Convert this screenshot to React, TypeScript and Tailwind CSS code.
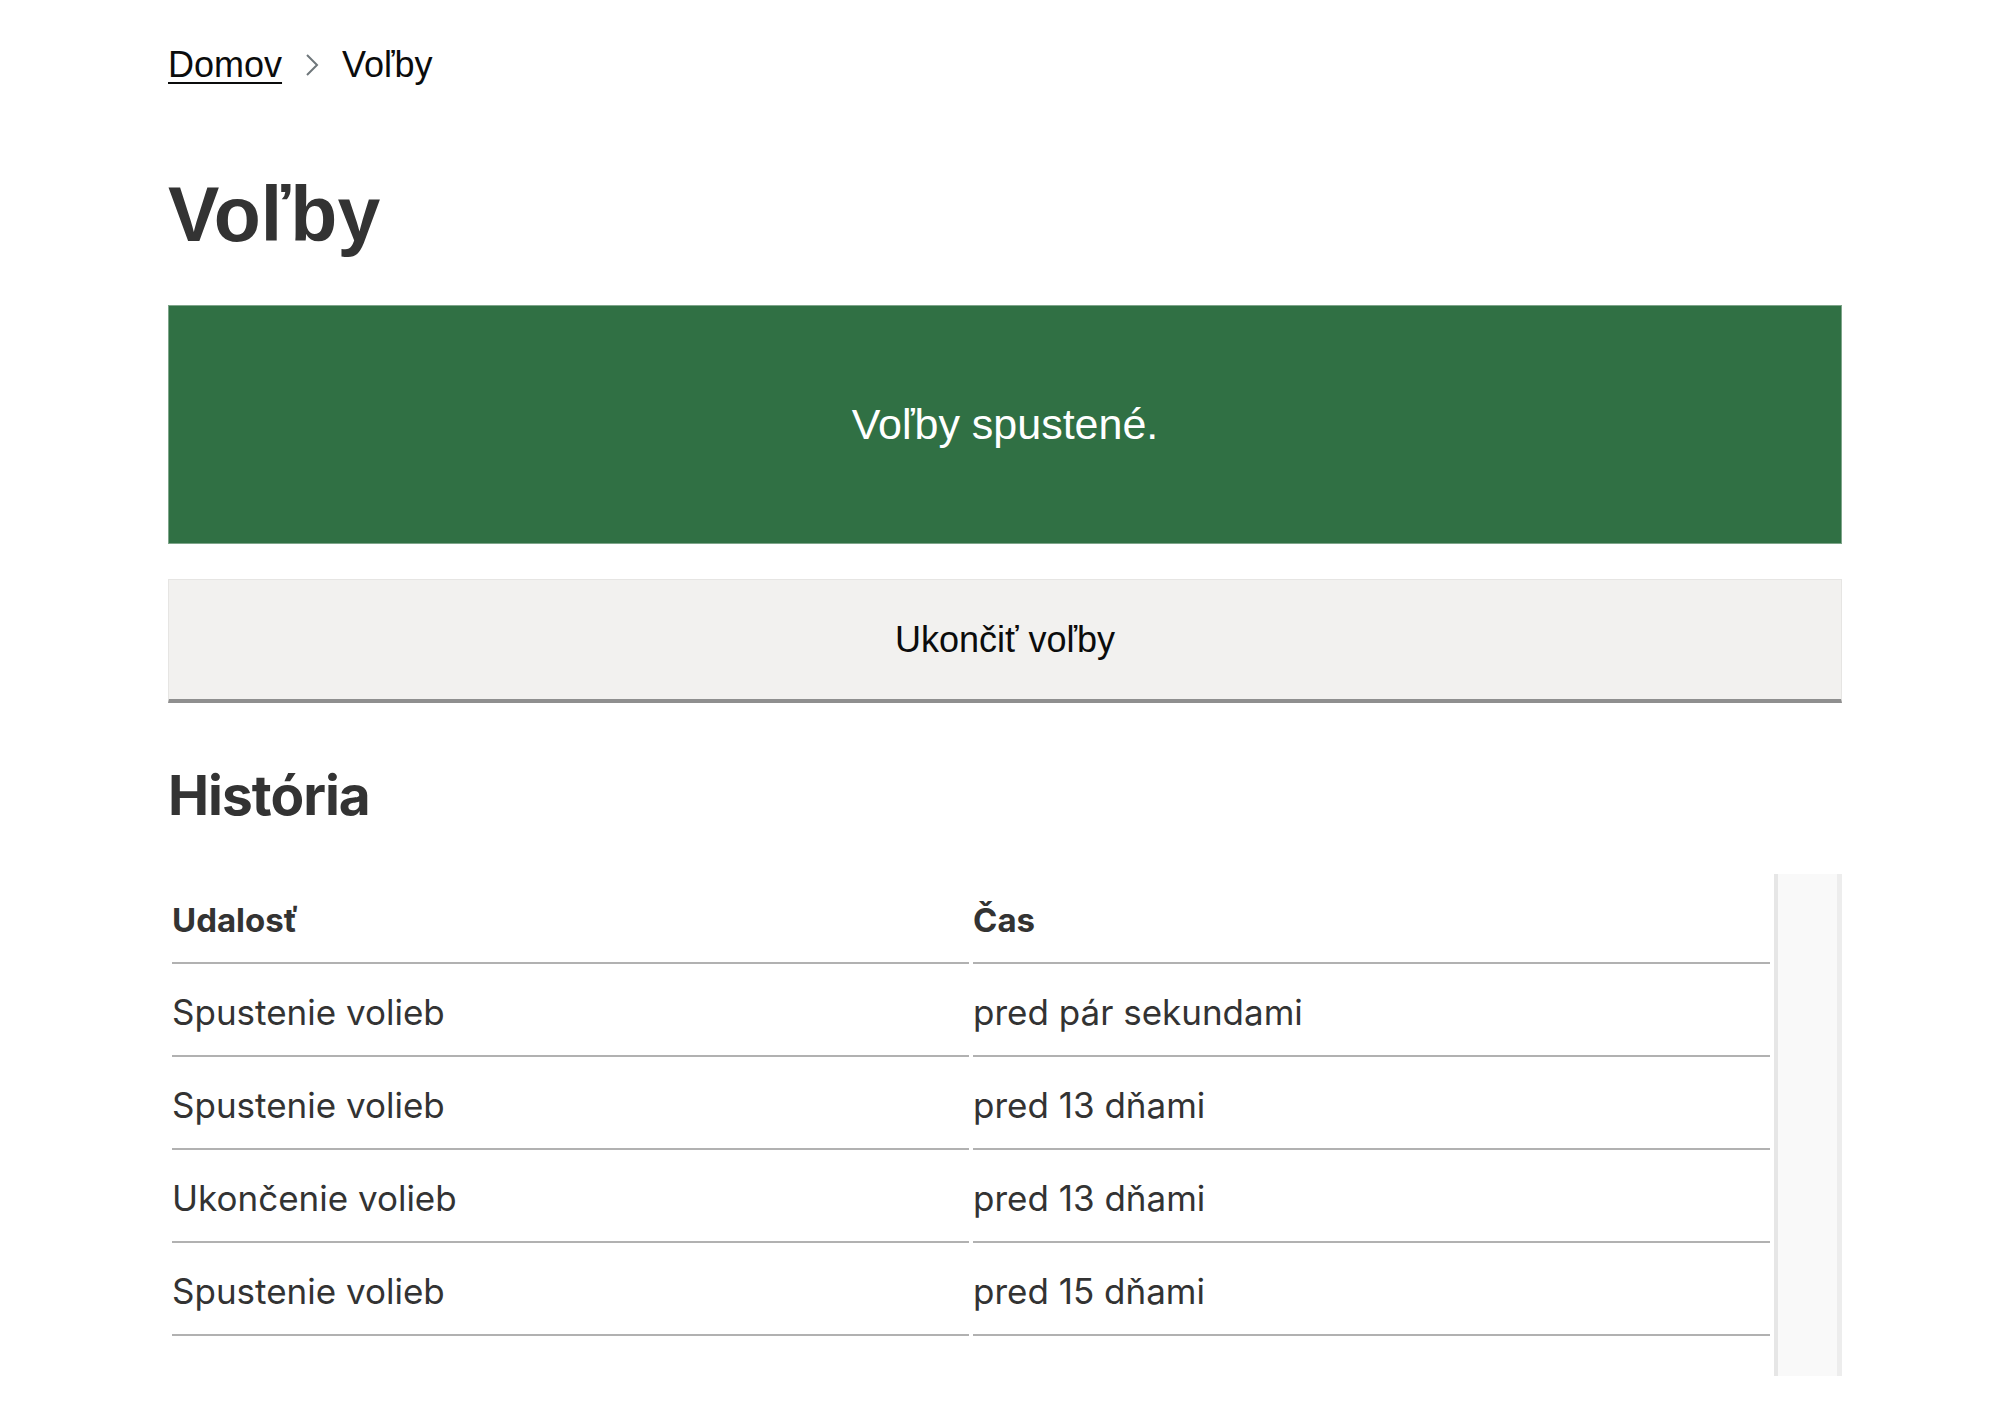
import React from 'react';

const rows = [
  { event: 'Spustenie volieb', time: 'pred pár sekundami' },
  { event: 'Spustenie volieb', time: 'pred 13 dňami' },
  { event: 'Ukončenie volieb', time: 'pred 13 dňami' },
  { event: 'Spustenie volieb', time: 'pred 15 dňami' },
];

const Chevron = () => (
  <svg width="14" height="24" viewBox="0 0 14 24" className="shrink-0">
    <polyline points="2,2 12,12 2,22" fill="none" stroke="#6f777b" strokeWidth="2" />
  </svg>
);

export default function App() {
  return (
    <div className="min-h-screen bg-white">
      <div className="ml-[168px] w-[1674px] pt-[44px] pb-[36px]">
        {/* Breadcrumb */}
        <nav className="flex items-center gap-[23px] text-[36px] leading-[41px] text-[#0b0c0c] font-['Liberation_Sans',Arial,sans-serif]">
          <a href="#" className="underline decoration-[2px] underline-offset-[5px]">Domov</a>
          <Chevron />
          <span>Voľby</span>
        </nav>

        <h1 className="mt-[85px] text-[77px] leading-[88px] font-bold text-[#333333] font-['Liberation_Sans',Arial,sans-serif]">
          Voľby
        </h1>

        {/* Status banner */}
        <div className="mt-[47px] h-[239px] flex items-center justify-center bg-[#307044] border border-[#7ea58a] text-white text-[43px] font-['Liberation_Sans',Arial,sans-serif]">
          Voľby spustené.
        </div>

        <button className="mt-[35px] w-full h-[124px] flex items-center justify-center bg-[#f2f1ef] border border-[#e6e5e3] border-b-[4px] border-b-[#8f8f8f] text-[36px] text-[#0b0c0c] font-['Liberation_Sans',Arial,sans-serif]">
          Ukončiť voľby
        </button>

        <h2 className="mt-[59px] text-[55px] leading-[67px] font-bold text-[#333333] font-['Inter',sans-serif] tracking-[-1px]">
          História
        </h2>

        {/* History table */}
        <div className="mt-[45px] flex font-['Inter',sans-serif] text-[#333333]">
          <div className="flex-1 pb-[40px]">
            <table className="w-full border-separate border-spacing-x-[4px] border-spacing-y-0 table-fixed">
              <thead>
                <tr>
                  <th className="text-left font-bold text-[33px] leading-[48px] pt-[22px] pb-[18px] border-b-[2px] border-[#b1b1b1]">Udalosť</th>
                  <th className="text-left font-bold text-[33px] leading-[48px] pt-[22px] pb-[18px] border-b-[2px] border-[#b1b1b1]">Čas</th>
                </tr>
              </thead>
              <tbody>
                {rows.map((r, i) => (
                  <tr key={i}>
                    <td className="text-[35px] leading-[51px] pt-[23px] pb-[17px] border-b-[2px] border-[#b1b1b1]">{r.event}</td>
                    <td className="text-[35px] leading-[51px] pt-[23px] pb-[17px] border-b-[2px] border-[#b1b1b1]">{r.time}</td>
                  </tr>
                ))}
              </tbody>
            </table>
          </div>
          <div className="w-[68px] bg-[#f9f9f9] border-l-[4px] border-l-[#e6e6e6] border-r-[5px] border-r-[#ededed]" />
        </div>
      </div>
    </div>
  );
}
